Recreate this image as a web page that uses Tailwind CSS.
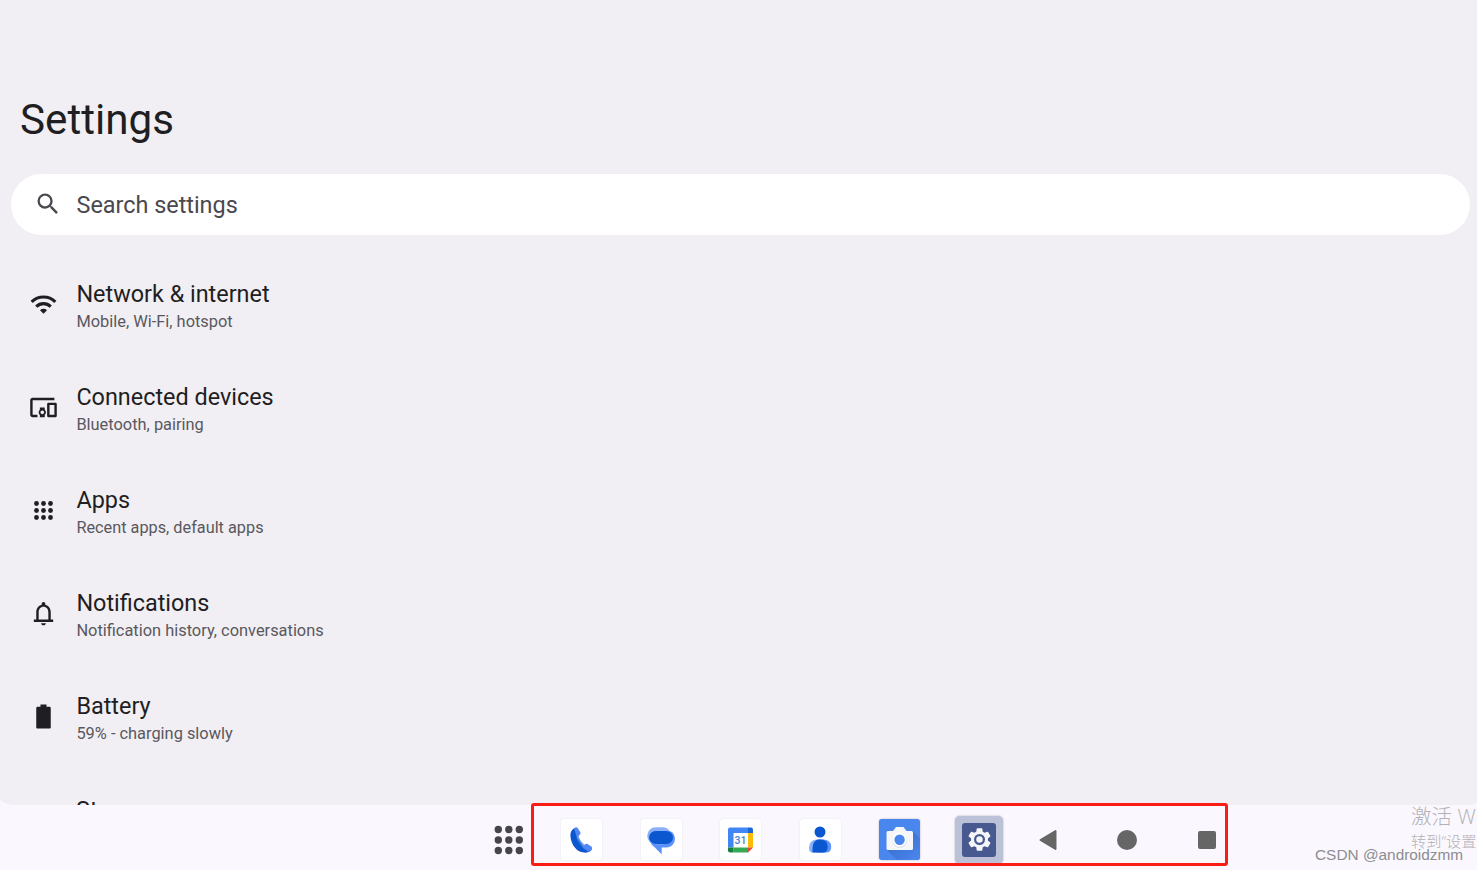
<!DOCTYPE html>
<html lang="en">
<head>
  <meta charset="UTF-8">
  <meta name="viewport" content="width=device-width, initial-scale=1.0">
  <title>Settings</title>
  <script src="https://cdn.jsdelivr.net/npm/@tailwindcss/browser@4"></script>
</head>
<body class="relative w-[1477px] h-[870px] overflow-hidden flex flex-col bg-[#faf8fe] font-['Roboto',sans-serif] text-[#1f1e22]">

  <!-- Settings screen -->
  <main class="h-[805px] shrink-0 overflow-hidden bg-[#f1eff3] rounded-[0_0_8px_16px/0_0_3px_7px]">
    <h1 class="pt-[92px] pl-5 text-[42.2px] leading-[56px]">Settings</h1>

    <!-- Search bar -->
    <div class="mt-[26px] ml-[11px] mr-[7px] h-[61px] rounded-full bg-white flex items-center text-[#4a484e]">
      <svg class="ml-[23px] mb-px w-7 h-7" viewBox="0 0 24 24" fill="currentColor">
        <path d="M15.5 14h-.79l-.28-.27A6.471 6.471 0 0 0 16 9.5 6.5 6.5 0 1 0 9.5 16c1.61 0 3.09-.59 4.23-1.57l.27.28v.79l5 4.99L20.49 19l-4.99-5zm-6 0C7.01 14 5 11.99 5 9.5S7.01 5 9.5 5 14 7.01 14 9.5 11.99 14 9.5 14z"/>
      </svg>
      <span class="ml-[14.5px] pt-0.5 text-[23.4px]">Search settings</span>
    </div>

    <!-- Preference list -->
    <ul class="mt-[18px]">
      <li class="h-[103px] flex">
        <svg class="mt-[37px] ml-[29px] w-[29px] h-[29px] shrink-0" viewBox="0 0 24 24" fill="none" stroke="currentColor" stroke-width="2.6">
          <path d="M2.200 9.800a13.900 13.900 0 0 1 19.600 0M6 13.700a8.500 8.500 0 0 1 12 0"/>
          <path d="M12 19.700l-2.900-2.900a4.100 4.100 0 0 1 5.800 0z" fill="currentColor" stroke="none"/>
        </svg>
        <div class="ml-[18.400px] pt-[26px]">
          <p class="text-[23.4px] leading-[30px]">Network &amp; internet</p>
          <p class="mt-[3px] text-[16.4px] leading-5 text-[#5a585e]">Mobile, Wi-Fi, hotspot</p>
        </div>
      </li>
      <li class="h-[103px] flex">
        <svg class="mt-[37px] ml-[29px] w-[29px] h-[29px] shrink-0" viewBox="0 0 24 24" fill="currentColor">
          <path d="M3 6h18V4H3c-1.1 0-2 .9-2 2v12c0 1.1.9 2 2 2h4v-2H3V6zm10 6H9v1.78c-.61.55-1 1.33-1 2.22s.39 1.67 1 2.22V20h4v-1.78c.61-.55 1-1.34 1-2.22s-.39-1.67-1-2.22V12zm-2 5.5c-.83 0-1.5-.67-1.5-1.5s.67-1.5 1.5-1.5 1.5.67 1.5 1.5-.67 1.5-1.5 1.5zM22 8h-6c-.5 0-1 .5-1 1v10c0 .5.5 1 1 1h6c.5 0 1-.5 1-1V9c0-.5-.5-1-1-1zm-1 10h-4v-8h4v8z"/>
        </svg>
        <div class="ml-[18.400px] pt-[26px]">
          <p class="text-[23.4px] leading-[30px]">Connected devices</p>
          <p class="mt-[3px] text-[16.4px] leading-5 text-[#5a585e]">Bluetooth, pairing</p>
        </div>
      </li>
      <li class="h-[103px] flex">
        <svg class="mt-[37px] ml-[29px] w-[29px] h-[29px] shrink-0" viewBox="0 0 24 24" fill="currentColor">
          <circle cx="6.200" cy="6.200" r="2"/><circle cx="12" cy="6.200" r="2"/><circle cx="17.800" cy="6.200" r="2"/>
          <circle cx="6.200" cy="12" r="2"/><circle cx="12" cy="12" r="2"/><circle cx="17.800" cy="12" r="2"/>
          <circle cx="6.200" cy="17.800" r="2"/><circle cx="12" cy="17.800" r="2"/><circle cx="17.800" cy="17.800" r="2"/>
        </svg>
        <div class="ml-[18.400px] pt-[26px]">
          <p class="text-[23.4px] leading-[30px]">Apps</p>
          <p class="mt-[3px] text-[16.3px] leading-5 text-[#5a585e]">Recent apps, default apps</p>
        </div>
      </li>
      <li class="h-[103px] flex">
        <svg class="mt-[37px] ml-[29px] w-[29px] h-[29px] shrink-0" viewBox="0 0 24 24" fill="currentColor">
          <path d="M18 17v-6c0-3.070-1.630-5.640-4.500-6.320V4c0-.83-.67-1.500-1.500-1.500s-1.500.67-1.500 1.500v.68C7.640 5.360 6 7.920 6 11v6H4v2h16v-2h-2zm-2 0H8v-6c0-2.480 1.510-4.500 4-4.500s4 2.020 4 4.500v6zm-4 4.700c1.100 0 2-.7 2-1.700h-4c0 1 .9 1.700 2 1.700z"/>
        </svg>
        <div class="ml-[18.400px] pt-[26px]">
          <p class="text-[23.4px] leading-[30px]">Notifications</p>
          <p class="mt-[3px] text-[16.4px] leading-5 text-[#5a585e]">Notification history, conversations</p>
        </div>
      </li>
      <li class="h-[103px] flex">
        <svg class="mt-[37px] ml-[29px] w-[29px] h-[29px] shrink-0" viewBox="0 0 24 24" fill="currentColor">
          <path d="M17 4h-2.500V2h-5v2H7c-.5 0-1 .5-1 1v16c0 .5.5 1 1 1h10c.5 0 1-.5 1-1V5c0-.5-.5-1-1-1z"/>
        </svg>
        <div class="ml-[18.400px] pt-[26px]">
          <p class="text-[23.4px] leading-[30px]">Battery</p>
          <p class="mt-[3px] text-[16.4px] leading-5 text-[#5a585e]">59% - charging slowly</p>
        </div>
      </li>
      <li class="h-[103px] pl-[76px] pt-[27px]">
        <p class="text-[23.4px] leading-[30px]">Storage</p>
      </li>
    </ul>
  </main>

  <!-- Taskbar -->
  <nav class="h-[65px] shrink-0 flex items-center pt-1 pl-[494px]">
    <svg class="w-[30px] h-[30px]" viewBox="0 0 30 30" fill="#46454c">
      <circle cx="4.300" cy="4.500" r="3.700"/><circle cx="14.800" cy="4.500" r="3.700"/><circle cx="25.300" cy="4.500" r="3.700"/>
      <circle cx="4.300" cy="15" r="3.700"/><circle cx="14.800" cy="15" r="3.700"/><circle cx="25.300" cy="15" r="3.700"/>
      <circle cx="4.300" cy="25.500" r="3.700"/><circle cx="14.800" cy="25.500" r="3.700"/><circle cx="25.300" cy="25.500" r="3.700"/>
    </svg>

    <div class="ml-[37px] flex items-center gap-[38.5px]">
      <!-- Phone -->
      <div class="w-[41px] h-[41px] rounded-[3px] bg-white shadow-[0_0_2px_rgba(0,0,0,0.1)]">
        <svg class="w-full h-full" viewBox="0 0 41 41">
          <defs>
            <linearGradient id="receiver" x1="0" y1="1" x2="1" y2="0">
              <stop offset="0.3" stop-color="#0b57d0"/>
              <stop offset="0.6" stop-color="#a8c7fa"/>
            </linearGradient>
          </defs>
          <path d="M13.5 9C10.5 10.500 9.200 13.500 9.400 17C10.200 26.500 16 33.600 24.500 33.700C28 33.600 30.500 32 31 29.500L25 25.500L22.500 27.500C19.500 25.500 17.500 22.500 17 18.500L19 14Z" fill="#0b57d0"/>
          <path d="M15.500 18.200L18 16C18 20 20.500 23.500 24 25.700L21.500 28.500C18.500 26.500 15.500 22.500 15.500 18.200Z" fill="url(#receiver)"/>
          <path d="M13 9.200Q15 7.700 16.500 8.700L19.400 13.200Q20 14.700 18.600 15.700L15.800 18.200Z" fill="#5087f5"/>
          <path d="M21.500 28.800L24 25.400Q25 24.300 26.500 25L30.300 27.500Q31.800 28.700 30.700 30.300Q29.500 32 27.500 32.800Z" fill="#5087f5"/>
        </svg>
      </div>
      <!-- Messages -->
      <div class="w-[41px] h-[41px] rounded-[3px] bg-white shadow-[0_0_2px_rgba(0,0,0,0.1)]">
        <svg class="w-full h-full" viewBox="0 0 41 41">
          <rect x="8.500" y="11" width="25.500" height="17.500" rx="8.700" fill="#5b91fc"/>
          <path d="M10.500 25L20.700 35.500V27Z" fill="#5b91fc"/>
          <rect x="6.200" y="8.300" width="24" height="17" rx="8.500" fill="#8ab0fa"/>
          <rect x="8" y="12" width="24" height="13" rx="6.500" fill="#0b57d0"/>
        </svg>
      </div>
      <!-- Calendar -->
      <div class="w-[41px] h-[41px] rounded-[3px] bg-white shadow-[0_0_2px_rgba(0,0,0,0.1)]">
        <svg class="w-full h-full" viewBox="0 0 41 41">
          <path d="M10 8.500H28V14H13.500V28.500H8V10.500Q8 8.500 10 8.500Z" fill="#4285f4"/>
          <path d="M28 8.500H31Q33 8.500 33 10.500V14H28Z" fill="#1967d2"/>
          <path d="M28 14H33V28.500H28Z" fill="#fbbc04"/>
          <path d="M13.500 28.500H28V33.500H13.500Z" fill="#34a853"/>
          <path d="M8 28.500H13.500V33.500H10Q8 33.500 8 31.500Z" fill="#188038"/>
          <path d="M28 28.500H33L28 33.500Z" fill="#ea4335"/>
          <text x="20.500" y="24.500" text-anchor="middle" font-family="Roboto" font-size="10.500" font-weight="500" fill="#4a7fd0">31</text>
        </svg>
      </div>
      <!-- Contacts -->
      <div class="w-[41px] h-[41px] rounded-[3px] bg-white shadow-[0_0_2px_rgba(0,0,0,0.1)]">
        <svg class="w-full h-full" viewBox="0 0 41 41">
          <circle cx="20" cy="13" r="5.500" fill="#0b57d0"/>
          <path d="M12.500 33.500Q9 33.500 9 29Q9 20.500 17.500 20.500H24V33.500Z" fill="#8ab0fa"/>
          <path d="M17 20.500H23Q31.200 20.500 31.200 28Q31.200 33.500 26 33.500H17Z" fill="#5b91fc"/>
          <path d="M12.500 33.500V29Q12.500 20.500 20 20.500Q27.700 20.500 27.700 27.500Q27.700 33.500 23 33.500Z" fill="#0b57d0"/>
        </svg>
      </div>
      <!-- Camera -->
      <div class="w-[41px] h-[41px] rounded-[3px] overflow-hidden bg-[#4986ee] shadow-[0_0_2px_rgba(0,0,0,0.3)]">
        <svg class="w-full h-full" viewBox="0 0 41 41">
          <defs>
            <linearGradient id="long-shadow" x1="0" y1="0" x2="1" y2="1">
              <stop offset="0.3" stop-color="#3c70cf"/>
              <stop offset="0.95" stop-color="#4986ee"/>
            </linearGradient>
          </defs>
          <path d="M33.500 12L41 19.500V41H18L8 31Z" fill="url(#long-shadow)"/>
          <path d="M9 12H14L17 8H24.500L27.500 12H32.500Q34 12 34 13.500V29.500Q34 31 32.500 31H9Q7.500 31 7.500 29.500V13.500Q7.500 12 9 12Z" fill="#f5f6f8"/>
          <circle cx="20.600" cy="21.600" r="7.200" fill="#d5dae3"/>
          <circle cx="20.600" cy="20.800" r="7" fill="#fff"/>
          <circle cx="20.600" cy="20.800" r="5.200" fill="#4986ee"/>
        </svg>
      </div>
    </div>

    <!-- Settings, currently open -->
    <div class="ml-[35px] w-[48px] h-[48px] rounded-[5px] bg-[#bbc2d8] shadow-[0_0_2px_rgba(0,0,0,0.35)] flex items-center justify-center">
      <div class="w-[34px] h-[34px] rounded-[3px] bg-[#48598f] flex items-center justify-center">
        <svg class="w-[27px] h-[27px]" viewBox="0 0 24 24">
          <path fill="#f5f6fa" d="M19.430 12.980c.04-.32.07-.64.07-.98s-.03-.66-.07-.98l2.110-1.650c.19-.15.24-.42.12-.64l-2-3.460c-.12-.22-.39-.3-.61-.22l-2.490 1c-.52-.4-1.080-.73-1.690-.98l-.38-2.650C14.460 2.180 14.250 2 14 2h-4c-.25 0-.46.18-.49.42l-.38 2.650c-.61.25-1.170.59-1.690.98l-2.490-1c-.23-.09-.49 0-.61.22l-2 3.460c-.13.22-.07.49.12.64l2.110 1.650c-.04.32-.07.65-.07.98s.03.66.07.98l-2.110 1.650c-.19.15-.24.42-.12.64l2 3.460c.12.22.39.3.61.22l2.490-1c.52.4 1.080.73 1.690.98l.38 2.650c.03.24.24.42.49.42h4c.25 0 .46-.18.49-.42l.38-2.650c.61-.25 1.170-.59 1.690-.98l2.490 1c.23.09.49 0 .61-.22l2-3.460c.12-.22.07-.49-.12-.64l-2.110-1.650z"/>
          <circle cx="12" cy="12" r="3.900" fill="#f5f6fa" stroke="#48598f" stroke-width="2"/>
        </svg>
      </div>
    </div>

    <!-- Navigation buttons -->
    <svg class="ml-[35.500px] w-[19px] h-[22px]" viewBox="0 0 19 22" fill="#666" stroke="#666" stroke-width="2" stroke-linejoin="round">
      <path d="M1.500 11L16.500 2V20Z"/>
    </svg>
    <div class="ml-[59.500px] w-5 h-5 rounded-full bg-[#666]"></div>
    <div class="ml-[60.500px] w-[18px] h-[18px] rounded-[2px] bg-[#666]"></div>
  </nav>

  <!-- Red highlight around the dock -->
  <div class="absolute left-[530.500px] top-[802.500px] w-[697.500px] h-[63px] border-[3px] border-[#fb1d14] rounded-[3px]"></div>

  <!-- Watermarks -->
  <div class="absolute right-0 top-[802px] w-[66px] overflow-hidden whitespace-nowrap font-['Noto_Sans_CJK_SC',sans-serif] font-light text-[#b3b2b6]">
    <p class="text-[20.500px] leading-[27px] [word-spacing:1px]">激活 <span class="font-['Open_Sans',sans-serif]">W</span></p>
    <p class="-mt-px text-[15.200px] leading-[22px]">转到<span class="font-['Open_Sans',sans-serif]">“</span>设置</p>
  </div>
  <p class="absolute left-[1315px] top-[844.500px] whitespace-nowrap font-['Liberation_Sans',sans-serif] text-[15.400px] leading-5 text-[#8d8c90]">CSDN @androidzmm</p>

</body>
</html>
